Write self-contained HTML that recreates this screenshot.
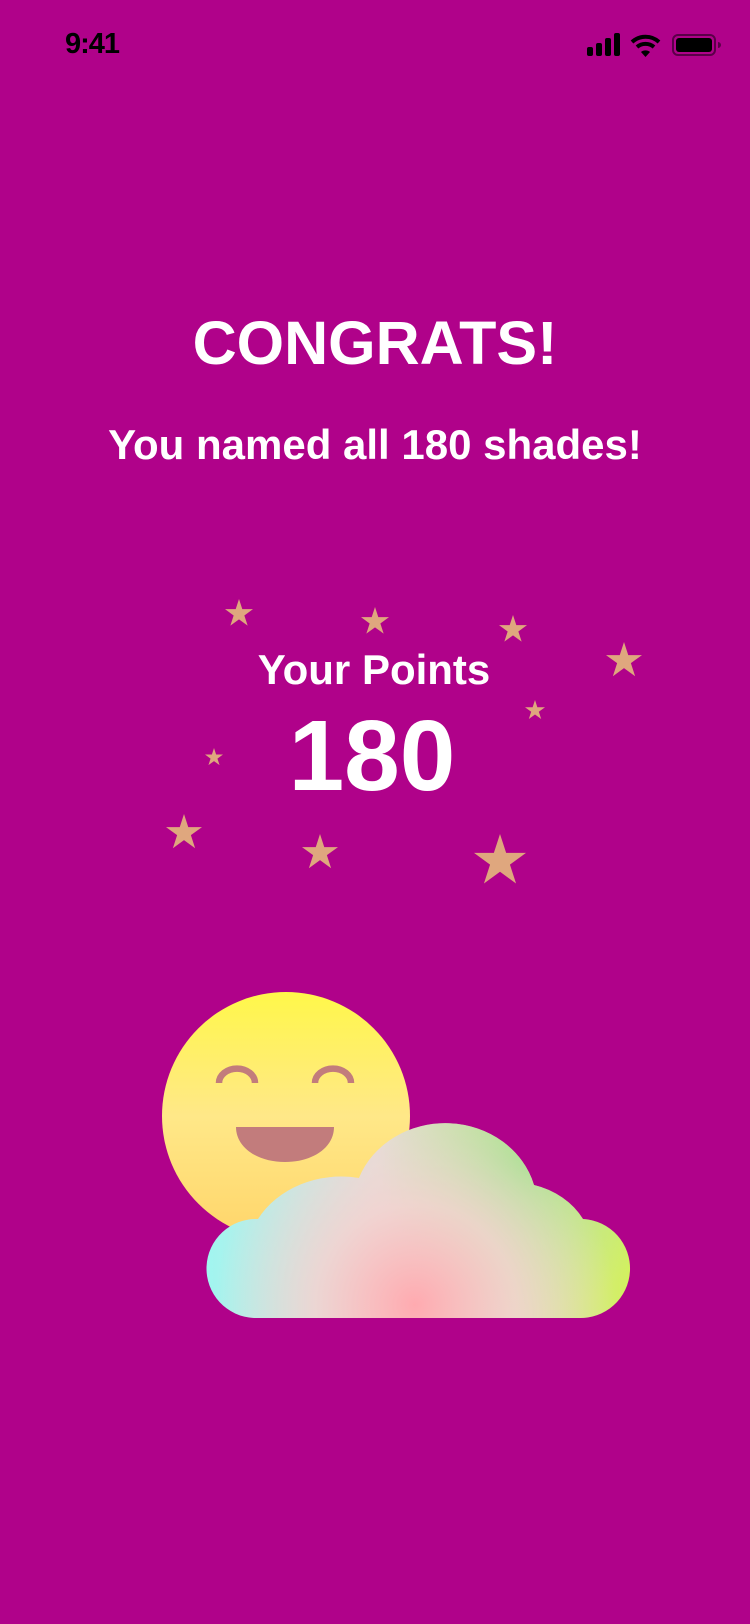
<!DOCTYPE html>
<html><head><meta charset="utf-8"><style>
*{margin:0;padding:0}
body{width:750px;height:1624px;background:#b0028a;position:relative;overflow:hidden;font-family:"Liberation Sans",sans-serif;color:#fff}
.t{position:absolute;left:0;width:750px;text-align:center;font-weight:bold;white-space:nowrap}
</style></head><body>
<div style="position:absolute;left:65px;top:28px;font-size:29px;color:#000;font-weight:bold;letter-spacing:-1px">9:41</div>
<svg style="position:absolute;left:585px;top:33px" width="140" height="26" viewBox="0 0 140 26">
<rect x="2" y="14" width="6" height="9" rx="2" fill="#000"/>
<rect x="11" y="10" width="6" height="13" rx="2" fill="#000"/>
<rect x="20" y="5" width="6" height="18" rx="2" fill="#000"/>
<rect x="29" y="0" width="6" height="23" rx="2" fill="#000"/>
<path d="M47 9 A20 20 0 0 1 74 9" stroke="#000" stroke-width="4" fill="none"/>
<path d="M52 14 A13 13 0 0 1 69 14" stroke="#000" stroke-width="4" fill="none"/>
<path d="M56 19 L60.5 24 L65 19 A7 7 0 0 0 56 19Z" fill="#000"/>
<rect x="88" y="2" width="42" height="20" rx="5" fill="none" stroke="#5a0048" stroke-width="2"/>
<rect x="91" y="5" width="36" height="14" rx="3" fill="#000"/>
<path d="M133 9 v6 a3 3 0 0 0 0 -6z" fill="#5a0048"/>
</svg>
<div class="t" style="top:308px;font-size:61px">CONGRATS!</div>
<div class="t" style="top:421px;font-size:42px">You named all 180 shades!</div>
<div class="t" style="top:646px;font-size:42px;left:-1px">Your Points</div>
<div class="t" style="top:699px;font-size:100px;left:-3px">180</div>
<svg style="position:absolute;left:0;top:0" width="750" height="1624">
<defs>
<polygon id="s" points="0.5,0 0.618,0.363 1,0.363 0.691,0.588 0.809,0.951 0.5,0.727 0.191,0.951 0.309,0.588 0,0.363 0.382,0.363"/>
<linearGradient id="sun" x1="0" y1="0" x2="0" y2="1"><stop offset="0" stop-color="#fff74a"/><stop offset="0.5" stop-color="#ffe888"/><stop offset="1" stop-color="#ffd56a"/></linearGradient>
<radialGradient id="cp" cx="415" cy="1305" r="200" gradientUnits="userSpaceOnUse"><stop offset="0" stop-color="#ffaab0"/><stop offset="0.5" stop-color="#f3d2d0" stop-opacity="0.8"/><stop offset="1" stop-color="#e8dcd6" stop-opacity="0"/></radialGradient>
<linearGradient id="cl" x1="204" y1="1250" x2="628" y2="1250" gradientUnits="userSpaceOnUse"><stop offset="0" stop-color="#9ff6f0"/><stop offset="0.4" stop-color="#e6dcd8"/><stop offset="0.7" stop-color="#dcdcb8"/><stop offset="1" stop-color="#d2f060"/></linearGradient>
<radialGradient id="cg" cx="530" cy="1160" r="150" gradientUnits="userSpaceOnUse"><stop offset="0" stop-color="#a6e08e"/><stop offset="1" stop-color="#b8e890" stop-opacity="0"/></radialGradient>
<path id="cpath" d="M254 1318 A49 49 0 0 1 258 1219 A95 82 0 0 1 359 1178 A92 84 0 0 1 534 1185 A80 70 0 0 1 583 1219 A49 49 0 0 1 578 1318 Z"/>
</defs>
<g fill="#dfa77e">
<use href="#s" transform="translate(225,599) scale(28)"/>
<use href="#s" transform="translate(361,607) scale(28)"/>
<use href="#s" transform="translate(499,615) scale(28)"/>
<use href="#s" transform="translate(606,642) scale(36)"/>
<use href="#s" transform="translate(525,700) scale(20)"/>
<use href="#s" transform="translate(205,748) scale(18)"/>
<use href="#s" transform="translate(166,814) scale(36)"/>
<use href="#s" transform="translate(302,834) scale(36)"/>
<use href="#s" transform="translate(474,834) scale(52)"/>
</g>
<circle cx="286" cy="1116" r="124" fill="url(#sun)"/>
<path d="M219 1083 A15 12 0 0 1 255 1083" stroke="#c27c7c" stroke-width="6.5" fill="none"/>
<path d="M315 1083 A15 12 0 0 1 351 1083" stroke="#c27c7c" stroke-width="6.5" fill="none"/>
<path d="M236 1127 H334 C334 1148 312 1162 285 1162 C258 1162 236 1148 236 1127Z" fill="#c27c7c"/>
<use href="#cpath" fill="url(#cl)"/>
<use href="#cpath" fill="url(#cg)"/>
<use href="#cpath" fill="url(#cp)"/>
</svg>
</body></html>
